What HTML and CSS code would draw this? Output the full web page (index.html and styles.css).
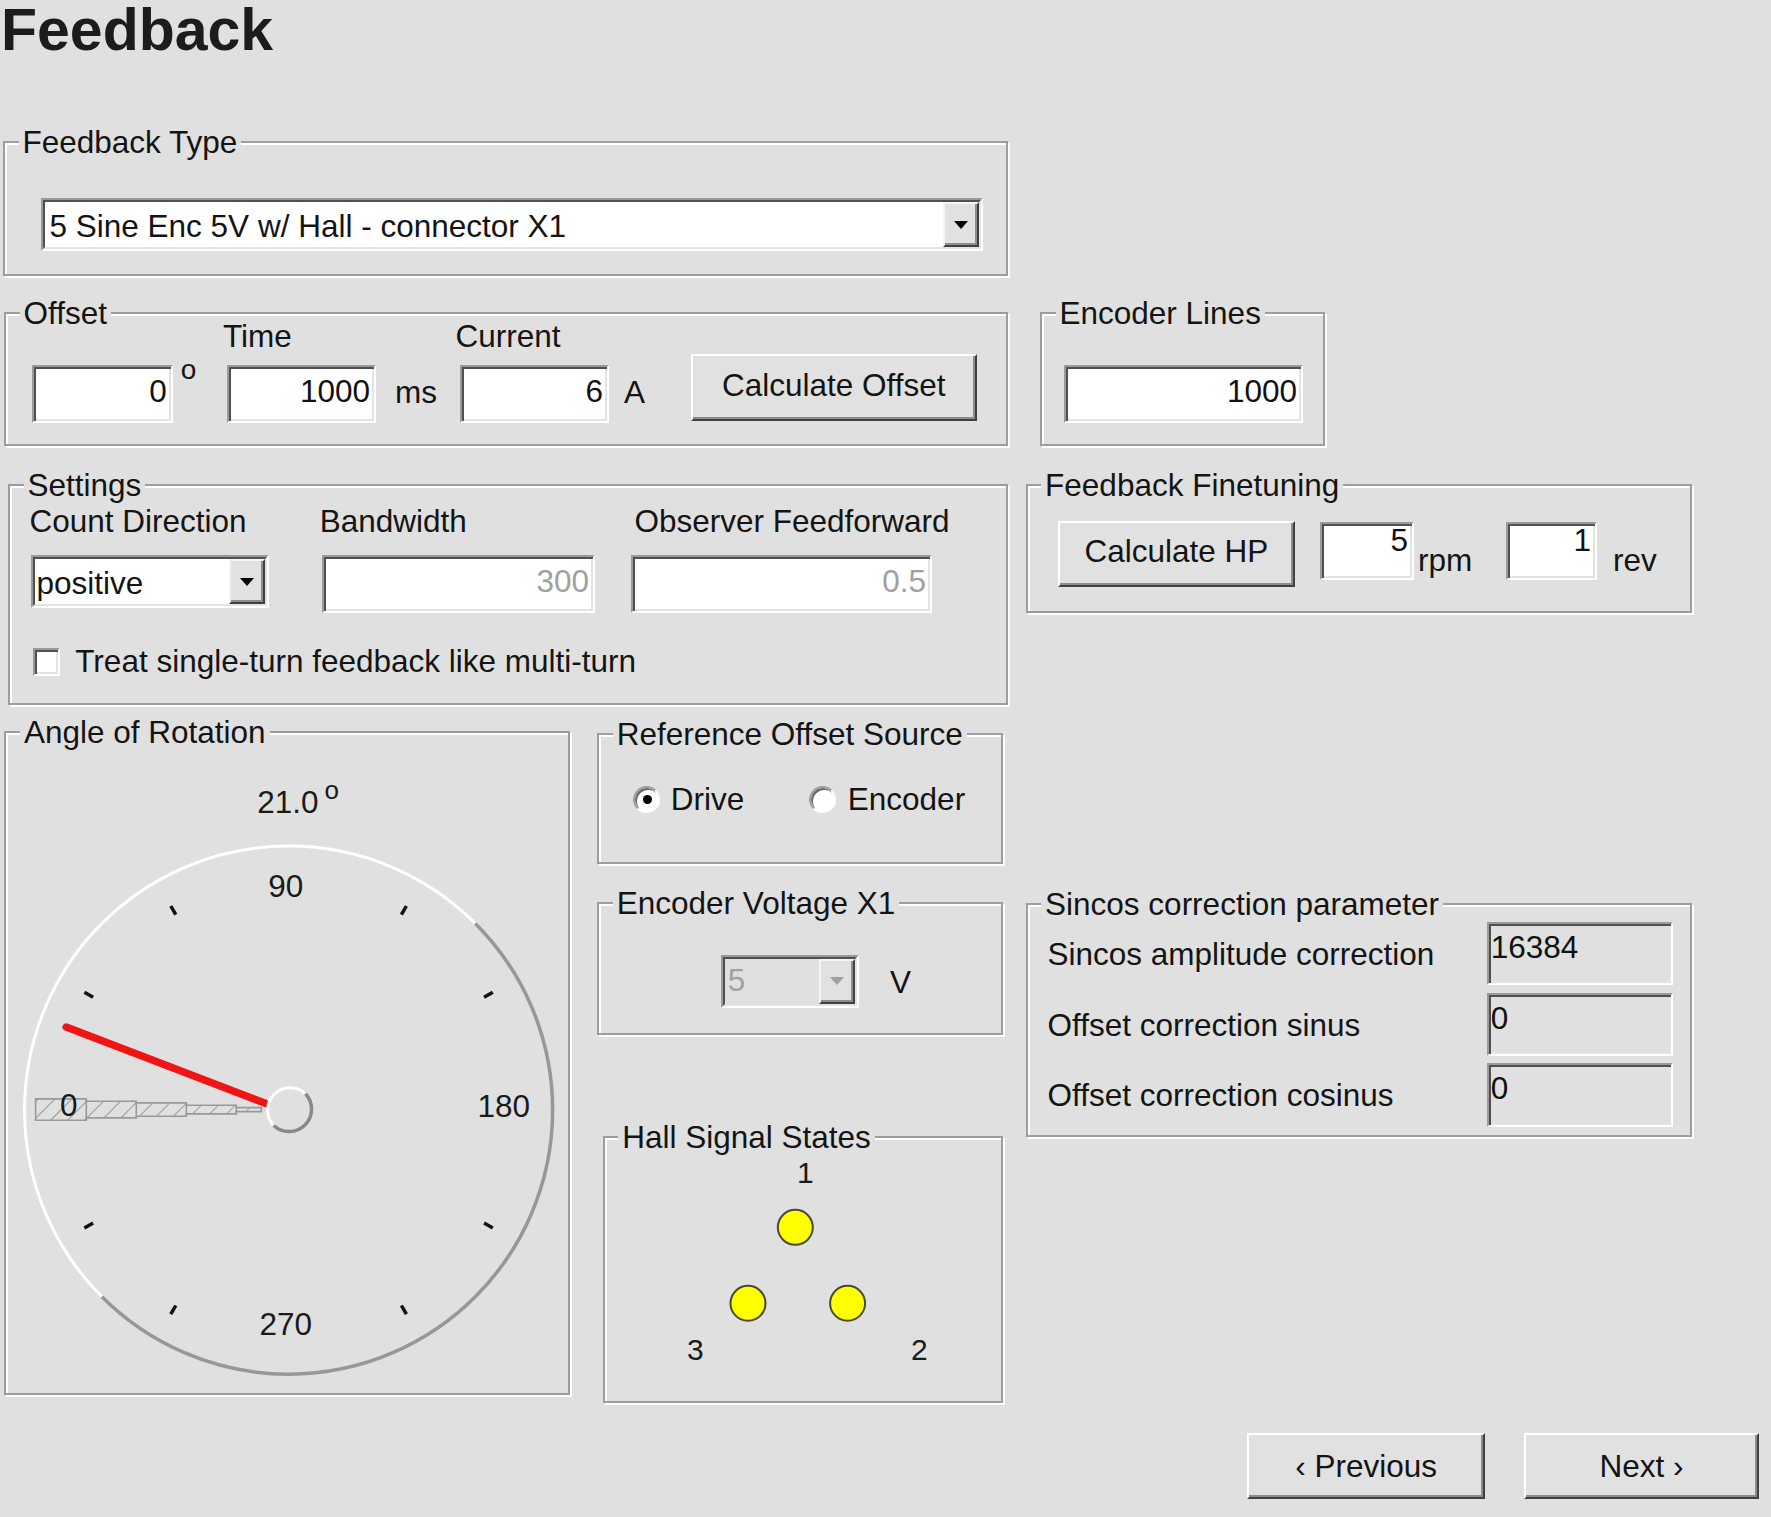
FILE: index.html
```html
<!DOCTYPE html>
<html lang="en">
<head>
<meta charset="utf-8">
<title>Feedback</title>
<link rel="stylesheet" href="styles.css">
</head>
<body>
<div class="page">
  <h1 class="title">Feedback</h1>

  <div class="row row1">
    <fieldset class="gb gb-type">
      <legend>Feedback Type</legend>
      <div class="combo combo-type">
        <div class="combo-in"><span class="combo-text">5 Sine Enc 5V w/ Hall - connector X1</span><span class="combo-btn"><i class="tri"></i></span></div>
      </div>
    </fieldset>
  </div>

  <div class="row row2">
    <fieldset class="gb gb-offset">
      <legend>Offset</legend>
      <div class="offset-row">
        <div class="field f-offset"><span class="lbl"></span><div class="edit num">0</div></div>
        <span class="deg">o</span>
        <div class="field f-time"><span class="lbl">Time</span><div class="edit num">1000</div></div>
        <span class="unit u-ms">ms</span>
        <div class="field f-current"><span class="lbl">Current</span><div class="edit num">6</div></div>
        <span class="unit u-a">A</span>
        <button class="btn btn-calc">Calculate Offset</button>
      </div>
    </fieldset>
    <fieldset class="gb gb-lines">
      <legend>Encoder Lines</legend>
      <div class="edit num lines-edit">1000</div>
    </fieldset>
  </div>

  <div class="row row3">
    <fieldset class="gb gb-settings">
      <legend>Settings</legend>
      <div class="set-row">
        <div class="col c-dir">
          <span class="lbl">Count Direction</span>
          <div class="combo combo-dir"><div class="combo-in"><span class="combo-text dir-text">positive</span><span class="combo-btn"><i class="tri"></i></span></div></div>
        </div>
        <div class="col c-bw">
          <span class="lbl">Bandwidth</span>
          <div class="edit num dim bw-edit">300</div>
        </div>
        <div class="col c-ob">
          <span class="lbl ob-lbl">Observer Feedforward</span>
          <div class="edit num dim ob-edit">0.5</div>
        </div>
      </div>
      <div class="check-row"><span class="checkbox"></span><span class="check-lbl">Treat single-turn feedback like multi-turn</span></div>
    </fieldset>
    <fieldset class="gb gb-fine">
      <legend>Feedback Finetuning</legend>
      <div class="fine-row">
        <button class="btn btn-hp">Calculate HP</button>
        <div class="edit num edit-sm fine-rpm">5</div><span class="unit fine-u1">rpm</span>
        <div class="edit num edit-sm fine-rev">1</div><span class="unit fine-u2">rev</span>
      </div>
    </fieldset>
  </div>

  <div class="row row4">
    <fieldset class="gb gb-angle">
      <legend>Angle of Rotation</legend>
      <svg class="gauge" viewBox="6.4 750.4 561.6 642" width="561.6" height="642" xmlns="http://www.w3.org/2000/svg">
        <defs>
          <pattern id="hatch" width="12" height="12" patternUnits="userSpaceOnUse" patternTransform="rotate(45)">
            <line x1="0" y1="0" x2="0" y2="12" stroke="#9a9a9a" stroke-width="2"/>
          </pattern>
        </defs>
        <text class="g-txt" x="257.7" y="813">21.0</text>
        <text class="g-deg" x="325" y="799.5">o</text>
        <path d="M475.7 923.8 A264 264 0 0 0 102.3 1297.2" fill="none" stroke="#ffffff" stroke-width="3"/>
        <path d="M475.7 923.8 A264 264 0 0 1 102.3 1297.2" fill="none" stroke="#979797" stroke-width="3.5"/>
        <g stroke="#111" stroke-width="3.5">
          <line x1="484.5" y1="997.6" x2="493.2" y2="992.6"/>
          <line x1="401.8" y1="915.1" x2="406.8" y2="906.4"/>
          <line x1="176.2" y1="915.1" x2="171.2" y2="906.4"/>
          <line x1="93.5" y1="997.6" x2="84.8" y2="992.6"/>
          <line x1="93.5" y1="1223.4" x2="84.8" y2="1228.4"/>
          <line x1="176.2" y1="1305.9" x2="171.2" y2="1314.6"/>
          <line x1="401.8" y1="1305.9" x2="406.8" y2="1314.6"/>
          <line x1="484.5" y1="1223.4" x2="493.2" y2="1228.4"/>
        </g>
        <text class="g-txt" x="268.7" y="897.5">90</text>
        <text class="g-txt" x="478" y="1117">180</text>
        <text class="g-txt" x="260" y="1335">270</text>
        <polygon points="36,1099.3 86.7,1099.3 86.7,1101.7 136.7,1101.7 136.7,1103.3 186.7,1103.3 186.7,1105.7 236.7,1105.7 236.7,1108 261.7,1108 261.7,1112 236.7,1112 236.7,1114.3 186.7,1114.3 186.7,1116.7 136.7,1116.7 136.7,1118.3 86.7,1118.3 86.7,1120.7 36,1120.7" fill="url(#hatch)" stroke="#999999" stroke-width="1.6"/>
        <g stroke="#999999" stroke-width="1.6">
          <line x1="86.7" y1="1099.3" x2="86.7" y2="1120.7"/>
          <line x1="136.7" y1="1101.7" x2="136.7" y2="1118.3"/>
          <line x1="186.7" y1="1103.3" x2="186.7" y2="1116.7"/>
          <line x1="236.7" y1="1105.7" x2="236.7" y2="1114.3"/>
        </g>
        <text class="g-txt" x="60.4" y="1116.7">0</text>
        <line x1="265.6" y1="1103.7" x2="66.6" y2="1027.5" stroke="#f01414" stroke-width="7.5" stroke-linecap="round"/>
        <path d="M305.9 1094.1 A22.5 22.5 0 0 0 274.1 1125.9" fill="none" stroke="#ffffff" stroke-width="3"/>
        <path d="M305.9 1094.1 A22.5 22.5 0 0 1 274.1 1125.9" fill="none" stroke="#888888" stroke-width="3.5"/>
      </svg>
    </fieldset>

    <div class="midcol">
      <fieldset class="gb gb-ref">
        <legend>Reference Offset Source</legend>
        <div class="radio-row">
          <span class="radio r1"><span class="dot"></span></span><span class="radio-lbl l1">Drive</span>
          <span class="radio r2"></span><span class="radio-lbl l2">Encoder</span>
        </div>
      </fieldset>
      <fieldset class="gb gb-volt">
        <legend>Encoder Voltage X1</legend>
        <div class="volt-row">
          <div class="combo combo-volt disabled"><div class="combo-in"><span class="combo-text">5</span><span class="combo-btn"><i class="tri"></i></span></div></div>
          <span class="unit u-v">V</span>
        </div>
      </fieldset>
      <fieldset class="gb gb-hall">
        <legend>Hall Signal States</legend>
        <svg class="hall" viewBox="604.7 1155 396 245.7" width="396" height="245.7" xmlns="http://www.w3.org/2000/svg">
          <text class="h-txt" x="796.7" y="1183.3">1</text>
          <circle cx="795" cy="1227.3" r="17.5" fill="#ffff00" stroke="#4a4a30" stroke-width="2"/>
          <circle cx="747.7" cy="1303.3" r="17.5" fill="#ffff00" stroke="#4a4a30" stroke-width="2"/>
          <circle cx="847.3" cy="1303.3" r="17.5" fill="#ffff00" stroke="#4a4a30" stroke-width="2"/>
          <text class="h-txt" x="686.7" y="1360">3</text>
          <text class="h-txt" x="910.8" y="1360">2</text>
        </svg>
      </fieldset>
    </div>

    <fieldset class="gb gb-sincos">
      <legend>Sincos correction parameter</legend>
      <div class="sc-grid">
        <span class="sc-lbl">Sincos amplitude correction</span><div class="edit ro">16384</div>
        <span class="sc-lbl">Offset correction sinus</span><div class="edit ro">0</div>
        <span class="sc-lbl">Offset correction cosinus</span><div class="edit ro">0</div>
      </div>
    </fieldset>
  </div>

  <div class="nav">
    <button class="btn btn-prev">&#8249; Previous</button>
    <button class="btn btn-next">Next &#8250;</button>
  </div>
</div>
</body>
</html>
```
FILE: styles.css
```css
* { box-sizing: border-box; }
html, body { margin: 0; padding: 0; }
body {
  background: #e0e0e0;
  font-family: "Liberation Sans", Arial, sans-serif;
  font-size: 31.5px;
  line-height: 36px;
  color: #141414;
  width: 1771px;
  height: 1517px;
  overflow: hidden;
}
.title {
  margin: 0;
  padding-left: 1px;
  font-size: 59px;
  line-height: 60px;
  font-weight: bold;
  color: #1c1c1c;
}
.row { display: flex; align-items: flex-start; }
.row1 { margin-top: 64px; }
.row2 { margin-top: 19px; }
.row3 { margin-top: 21px; }
.row4 { margin-top: 9.4px; }

/* group boxes */
.gb {
  margin: 0;
  padding: 0;
  min-width: 0;
  border: 2px solid #9d9d9d;
  box-shadow: inset 2px 2px 0 #ffffff, 2px 2px 0 #ffffff;
}
.gb > legend {
  padding: 0 4px;
  margin-left: 13.5px;
  line-height: 36px;
  background: #e0e0e0;
}
.gb-type { margin-left: 3px; width: 1004.5px; height: 152px; }
.gb-offset { margin-left: 4px; width: 1003.5px; height: 151px; }
.gb-lines { margin-left: 32.5px; width: 285px; height: 151px; }
.gb-settings { margin-left: 8px; width: 999.5px; height: 238px; }
.gb-fine { margin-left: 18.1px; width: 666.4px; height: 145.7px; }
.gb-angle { margin-left: 4.4px; width: 565.6px; height: 680.6px; }
.midcol { margin-left: 27.3px; width: 405.4px; display: flex; flex-direction: column; align-items: flex-start; }
.gb-ref { margin-top: 1.3px; width: 405.4px; height: 148.3px; }
.gb-volt { margin-top: 20.7px; width: 405.4px; height: 150.3px; }
.gb-hall { margin-top: 84px; margin-left: 5.4px; width: 400px; height: 283.7px; }
.gb-sincos { margin-left: 22.9px; margin-top: 171.3px; width: 666.4px; height: 251px; }

/* edit boxes */
.edit {
  height: 58px;
  background: #ffffff;
  border: 2px solid;
  border-color: #9a9a9a #ffffff #ffffff #9a9a9a;
  box-shadow: inset 2px 2px 0 #505050, inset -2px -2px 0 #e3e3e3;
  padding: 6px 4px 0 4px;
  line-height: 36px;
  white-space: nowrap;
  overflow: hidden;
  color: #111;
}
.num { text-align: right; }
.dim { color: #a0a0a0; }
.edit-sm { line-height: 28px; padding-top: 2px; }
.ro {
  background: #e0e0e0;
  height: 63.3px;
  text-align: left;
  padding: 5px 2px 0 2px;
}

/* combo boxes */
.combo {
  height: 53px;
  border: 2px solid;
  border-color: #9a9a9a #ffffff #ffffff #9a9a9a;
}
.combo-in {
  display: flex;
  height: 100%;
  border: 2px solid;
  border-color: #505050 #e3e3e3 #e3e3e3 #505050;
  background: #ffffff;
}
.combo-text {
  flex: 1;
  padding: 6px 0 0 4.5px;
  line-height: 36px;
  white-space: nowrap;
  overflow: hidden;
}
.combo-btn {
  width: 36px;
  background: #e1e1e1;
  border: 2px solid;
  border-color: #f4f4f4 #404040 #404040 #f4f4f4;
  box-shadow: inset -2px -2px 0 #8c8c8c;
  display: flex;
  align-items: center;
  justify-content: center;
}
.tri {
  width: 0;
  height: 0;
  border-left: 7px solid transparent;
  border-right: 7px solid transparent;
  border-top: 8px solid #000;
}
.combo-type { margin: 38px 0 0 36px; width: 942px; }
.combo-dir { margin: 16px 0 0 1px; width: 238.2px; }
.dir-text { padding-left: 2px; }
.combo-volt { width: 138.6px; height: 52.7px; }
.disabled .combo-in { background: #e0e0e0; }
.disabled .combo-text { color: #a0a0a0; padding-left: 3px; padding-top: 3px; }
.disabled .tri { border-top-color: #a0a0a0; }

/* buttons */
.btn {
  font: inherit;
  color: #141414;
  margin: 0;
  padding: 0;
  display: flex;
  align-items: center;
  justify-content: center;
  background: #e1e1e1;
  border: 2px solid;
  border-color: #ffffff #404040 #404040 #ffffff;
  box-shadow: inset -2px -2px 0 #8c8c8c;
  line-height: 36px;
  white-space: nowrap;
}

/* offset row */
.offset-row { display: flex; align-items: flex-start; margin-top: -13px; }
.field { display: flex; flex-direction: column; }
.lbl { display: block; height: 36px; line-height: 36px; white-space: nowrap; }
.field .edit { margin-top: 11px; }
.f-offset { margin-left: 25.7px; width: 141px; }
.deg { margin: 38px 0 0 8px; font-size: 28px; line-height: 28px; }
.f-time { margin-left: 30.7px; width: 149px; }
.f-time .lbl { margin-left: -4px; }
.unit { white-space: nowrap; }
.u-ms { margin: 56px 0 0 19px; }
.f-current { margin-left: 23px; width: 149px; }
.f-current .lbl { margin-left: -4.5px; }
.u-a { margin: 56px 0 0 15px; }
.btn-calc { margin: 36px 0 0 45.6px; width: 286.4px; height: 66.7px; padding-bottom: 4px; }
.lines-edit { margin: 34px 0 0 22px; width: 239px; }

/* settings */
.set-row { display: flex; align-items: flex-start; }
.col { display: flex; flex-direction: column; }
.c-dir { margin-left: 19.5px; width: 239.2px; }
.c-bw { margin-left: 51px; width: 275.3px; }
.bw-edit { margin: 16px 0 0 2.3px; width: 273px; }
.c-ob { margin-left: 36px; width: 301px; }
.ob-lbl { margin-left: 3.5px; }
.ob-edit { margin-top: 16px; width: 301px; }
.check-row { display: flex; align-items: flex-start; margin-top: 29.8px; }
.checkbox {
  margin: 5.2px 0 0 22.5px;
  width: 27px;
  height: 28px;
  background: #ffffff;
  border: 2px solid;
  border-color: #9a9a9a #ffffff #ffffff #9a9a9a;
  box-shadow: inset 2px 2px 0 #505050, inset -2px -2px 0 #e3e3e3;
}
.check-lbl { margin-left: 15.8px; white-space: nowrap; }

/* finetuning */
.fine-row { display: flex; align-items: flex-start; margin-top: 18px; }
.btn-hp { margin-left: 30.4px; width: 236.8px; height: 65.7px; padding-bottom: 6px; }
.fine-rpm { margin: 0.7px 0 0 25.2px; width: 94px; height: 58.3px; }
.fine-u1 { margin: 21px 0 0 4px; }
.fine-rev { margin: 0.7px 0 0 33.3px; width: 91.5px; height: 58.3px; }
.fine-u2 { margin: 21px 0 0 16px; }

/* gauge */
.gauge, .hall { display: block; }
.g-txt { font-family: "Liberation Sans", Arial, sans-serif; font-size: 31.5px; fill: #1a1a1a; }
.g-deg { font-family: "Liberation Sans", Arial, sans-serif; font-size: 26px; fill: #1a1a1a; }
.h-txt { font-family: "Liberation Sans", Arial, sans-serif; font-size: 30px; fill: #1a1a1a; }

/* radios */
.radio-row { display: flex; align-items: center; height: 36px; margin-top: 29.4px; }
.radio {
  width: 27px;
  height: 27px;
  border-radius: 50%;
  background: #ffffff;
  border: 2px solid;
  border-color: #a0a0a0 #ffffff #ffffff #a0a0a0;
  box-shadow: inset 2px 2px 0 #6a6a6a;
  display: flex;
  align-items: center;
  justify-content: center;
}
.dot { width: 9px; height: 9px; border-radius: 50%; background: #000; margin: 1px 0 0 1px; }
.r1 { margin-left: 34px; }
.l1 { margin-left: 10.5px; }
.r2 { margin-left: 65px; }
.l2 { margin-left: 11.5px; }

/* voltage */
.volt-row { display: flex; align-items: flex-start; margin-top: 34.3px; }
.combo-volt { margin-left: 121.4px; }
.u-v { margin: 9.1px 0 0 30.7px; }

/* sincos */
.sc-grid {
  display: grid;
  grid-template-columns: 439.3px 186.2px;
  grid-auto-rows: 63.3px;
  row-gap: 7.6px;
  margin-left: 19.9px;
}
.sc-lbl { padding-top: 14px; white-space: nowrap; }

/* navigation */
.nav {
  display: flex;
  justify-content: flex-end;
  gap: 39.2px;
  margin-top: 30.6px;
  padding-right: 12px;
}
.btn-prev { width: 237.5px; height: 66px; }
.btn-next { width: 235px; height: 66px; }
```
